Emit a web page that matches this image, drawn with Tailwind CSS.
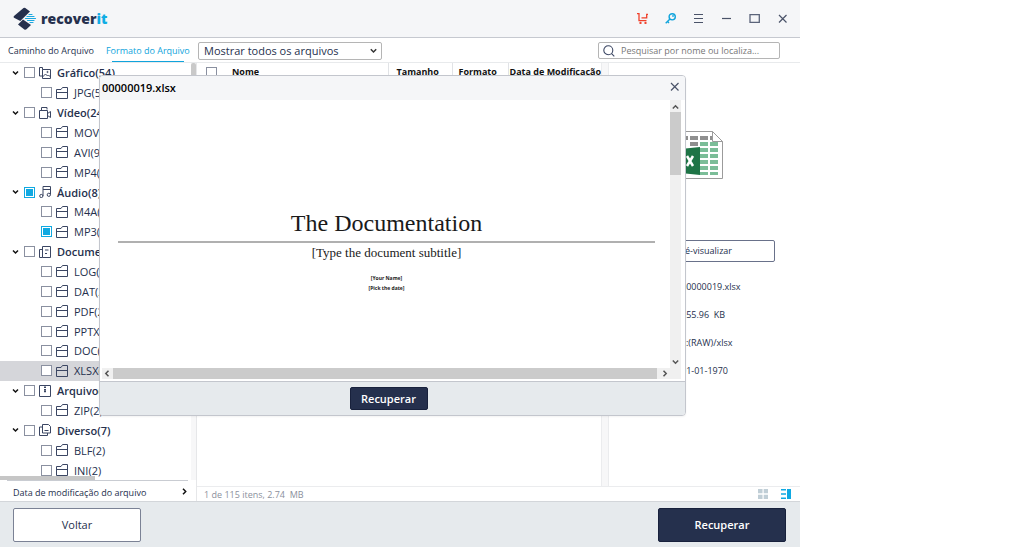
<!DOCTYPE html>
<html lang="pt-BR">
<head>
  <meta charset="UTF-8" />
  <title>Recoverit</title>
  <meta name="viewport" content="width=device-width, initial-scale=1" />
  <script src="https://cdn.jsdelivr.net/npm/@tailwindcss/browser@4"></script>
</head>
<body class="bg-white font-['Open_Sans','Noto_Sans',sans-serif] text-[#25304d]">
  <div class="relative flex flex-col h-screen w-full max-w-[800px] overflow-hidden">

    <!-- Title bar -->
    <header class="flex items-center justify-between h-[38px] shrink-0 pl-[13px] pr-3 bg-[#f5f6f8] border-b border-[#c6c9d0]">
      <div class="flex items-center gap-1">
        <svg class="w-6 h-6" viewBox="0 0 24 24">
          <path fill="#25304d" d="M12.300 1 L17 4.500 L7.300 14 L1 10.800 Q0 10 1 9 L10.500 1 Q11.400 .4 12.300 1 Z" />
          <path fill="#25304d" d="M10 12.500 L18 18 L13.500 22.300 Q12.500 23.100 11.300 22.400 L5 17.600 Z" />
          <path stroke="#1ba8e0" stroke-width="1.2" stroke-linecap="round" d="M16 7.500h3 M14 9.500h7 M12.500 11.500h10 M14.500 13.500h6.500 M17 15.500h3" />
        </svg>
        <h1 class="text-[14px] leading-5 font-extrabold">recover<span class="text-[#10ade4]">it</span></h1>
      </div>
      <div class="flex items-center gap-[17px]">
        <button aria-label="Comprar" class="w-[11px] h-4 flex items-center">
          <svg class="w-[11px] h-[11px]" viewBox="0 0 11 11" fill="none" stroke="#f0402a" stroke-width="1.3"><path d="M0 .7h2v7h7.500 M4.500 4.800h5.200v-3.500h1.300" /><circle cx="3.500" cy="10" r=".5" /><circle cx="8.500" cy="10" r=".5" /></svg>
        </button>
        <button aria-label="Registrar" class="w-[11px] h-4 flex items-center">
          <svg class="w-[11px] h-[11px]" viewBox="0 0 11 11" fill="none" stroke="#10a4dc" stroke-width="1.4"><circle cx="7.200" cy="3.800" r="3.100" /><path d="M5 6 L.7 10.300 M2.500 8.500l1.500 1.500" /><circle cx="8" cy="3" r=".3" /></svg>
        </button>
        <button aria-label="Menu" class="w-[11px] h-4 flex items-center">
          <svg class="w-[11px] h-[11px]" viewBox="0 0 11 11" stroke="#4a5369" stroke-width="1.2"><path d="M1 1.500h9 M1 5.500h9 M1 9.500h9" /></svg>
        </button>
        <button aria-label="Minimizar" class="w-[11px] h-4 flex items-center">
          <svg class="w-[11px] h-[11px]" viewBox="0 0 11 11" stroke="#4a5369" stroke-width="1.2"><path d="M1 5.500h9" /></svg>
        </button>
        <button aria-label="Maximizar" class="w-[11px] h-4 flex items-center">
          <svg class="w-[11px] h-[11px]" viewBox="0 0 11 11" fill="none" stroke="#5b647a" stroke-width="1.3"><path d="M1 1.600h9.300v7.800h-9.300z" /></svg>
        </button>
        <button aria-label="Fechar" class="w-[11px] h-4 flex items-center">
          <svg class="w-[11px] h-[11px]" viewBox="0 0 11 11" stroke="#4a5369" stroke-width="1.2"><path d="M2 2l7.500 7.500 M9.500 2l-7.500 7.500" /></svg>
        </button>
      </div>
    </header>

    <!-- Toolbar -->
    <div class="flex h-[25px] shrink-0 border-b border-[#e8eaec]">
      <nav class="flex w-[198px] shrink-0 pl-2 gap-3 text-[9px] leading-3 whitespace-nowrap">
        <a href="#" class="pt-[7px]">Caminho do Arquivo</a>
        <a href="#" class="pt-[7px] text-[#10a4dc] relative after:absolute after:left-[6px] after:right-[6px] after:bottom-0 after:h-px after:bg-[#10a4dc]">Formato do Arquivo</a>
      </nav>
      <div class="relative w-[184px] h-[18px] mt-1">
        <select aria-label="Filtro" class="block appearance-none w-full h-full pl-[5px] text-[11px] leading-4 bg-white border border-[#b5b5b5] rounded-xs">
          <option>Mostrar todos os arquivos</option>
        </select>
        <svg class="absolute right-[5px] top-[6px] w-[7px] h-[6px] pointer-events-none" viewBox="0 0 7 6" fill="none" stroke="#333" stroke-width="1.500"><path d="M.8 1.300l2.700 2.700 2.700-2.700" /></svg>
      </div>
      <label class="relative ml-auto mr-5 mt-1 w-[182px] h-[17px]">
        <svg class="absolute left-[5px] top-[3px] w-3 h-3" viewBox="0 0 12 12" fill="none" stroke="#3b4663" stroke-width="1.100"><circle cx="5.300" cy="5.300" r="4.500" /><path d="M8.600 8.600l2.700 2.700" /></svg>
        <input type="text" aria-label="Pesquisar" placeholder="Pesquisar por nome ou localiza..." class="block w-full h-full pl-[22px] text-[9px] border border-[#b5b5b5] rounded-xs placeholder:text-[#777]" />
      </label>
    </div>

    <div class="flex flex-1 min-h-0">
      <!-- File type tree -->
      <aside class="flex flex-col w-[197px] shrink-0 border-r border-[#e6e7e9]">
        <div class="relative flex-1 min-h-0 overflow-hidden">
          <ul id="tree" class="grid auto-rows-fr h-full text-[11px] leading-4"></ul>
          <div class="absolute right-0 inset-y-0 w-[5px] bg-[#f7f7f8]"><div class="h-[180px] bg-[#c9c9c9] rounded-xs"></div></div>
          <div class="absolute left-0 bottom-0 w-[95px] h-1 bg-[#c6c6c6]"></div>
        </div>
        <button class="flex items-center justify-between h-[21px] ml-[7px] mr-2 pl-[6px] pr-px border-t border-[#c9ccd2] text-[9px] leading-3">
          <span class="pt-1">Data de modificação do arquivo</span>
          <svg class="w-[5px] h-[7px]" viewBox="0 0 5 7" fill="none" stroke="#111" stroke-width="1.500"><path d="M1 .8l2.700 2.700-2.700 2.700" /></svg>
        </button>
      </aside>

      <div class="flex flex-col flex-1 min-w-0">
        <div class="flex flex-1 min-h-0">
          <div class="flex-1">
            <table class="w-full table-fixed text-[9px] leading-3 text-[#111]">
              <thead>
                <tr class="h-[18px] text-left">
                  <th class="w-[191px] pl-[9px] border-r border-[#e1e3e6]">
                    <div class="flex items-center gap-[15px]">
                      <input type="checkbox" aria-label="Selecionar tudo" class="appearance-none w-[11px] h-[11px] border border-[#8a90a0]" />
                      <span>Nome</span>
                    </div>
                  </th>
                  <th class="w-[64px] pl-2 border-r border-[#e1e3e6]">Tamanho</th>
                  <th class="w-[56px] pl-[6px] border-r border-[#e1e3e6]">Formato</th>
                  <th class="pl-px whitespace-nowrap">Data de Modificação</th>
                </tr>
              </thead>
            </table>
          </div>
          <div class="w-[8px] shrink-0 bg-[#f7f7f8] border-x border-[#ebecee]"></div>

          <!-- Details of the selected file -->
          <section class="w-[191px] shrink-0 flex flex-col items-center pt-[67px] text-[9px] leading-3">
            <svg class="w-[62px] h-[50px] mr-[26px]" viewBox="0 0 62 50">
              <path fill="#fff" stroke="#9b9b9b" d="M20.500 1.500h31l10 10v37h-41z" />
              <path fill="#8f8f8f" d="M29 6h8v4h-8z M39 6h8v4h-8z M49 6h3v4h-3z M29 12h8v4h-8z M20 6h7v4h-7z" />
              <g fill="#7bbd98">
                <path d="M39 12h8v4h-8z M49 12h8v4h-8z M39 18h8v4h-8z M49 18h8v4h-8z M39 24h8v4h-8z M49 24h8v4h-8z M39 30h8v4h-8z M49 30h8v4h-8z M39 36h8v4h-8z M49 36h8v4h-8z M39 42h8v3h-8z M49 42h8v3h-8z" />
              </g>
              <path fill="#1e7446" d="M10 20l29-3v28l-29-3z" />
              <path stroke="#fff" stroke-width="2.500" d="M26 26l6 10 M32 26l-6 10" />
              <path fill="#fff" stroke="#9b9b9b" d="M51.500 1.500v10h10z" />
            </svg>
            <button class="w-[142px] h-[22px] mt-[60px] mr-px border border-[#69718a] rounded-xs">Pré-visualizar</button>
            <dl class="grid grid-cols-[58px_1fr] gap-y-4 w-full pl-[14px] mt-[19px] whitespace-pre">
              <dt>Nome</dt><dd>00000019.xlsx</dd>
              <dt>Tamanho</dt><dd>555.96  KB</dd>
              <dt>Caminho</dt><dd>E:(RAW)/xlsx</dd>
              <dt>Data</dt><dd>01-01-1970</dd>
            </dl>
          </section>
        </div>
        <div class="flex items-center h-[15px] shrink-0 pl-[7px] pr-[9px] border-t border-[#ebecee] text-[9px] leading-3 text-[#8b909c]">
          <span class="pt-px whitespace-pre">1 de 115 itens, 2.74  MB</span>
          <button aria-label="Grade" class="ml-auto"><svg class="w-[10px] h-[10px]" viewBox="0 0 10 10" fill="#c0ced6"><path d="M0 0h4.500v4.300h-4.500z M5.700 0h4.300v4.300h-4.300z M0 5.700h4.500v4.300h-4.500z M5.700 5.700h4.300v4.300h-4.300z" /></svg></button>
          <button aria-label="Lista" class="ml-[13px]"><svg class="w-[10px] h-[10px]" viewBox="0 0 10 10" fill="#10a9e2"><path d="M0 0h5v1.500h-5z M0 4.300h5v1.500h-5z M0 8.500h5v1.500h-5z M6 0h4v10h-4z" /></svg></button>
        </div>
      </div>
    </div>

    <!-- Bottom bar -->
    <footer class="flex items-center justify-between h-[46px] shrink-0 pl-[13px] pr-[14px] bg-[#e6eaed] border-t border-[#d3d6da] text-[11px] leading-4">
      <button class="w-32 h-[34px] bg-white border border-[#7b8295] rounded-xs">Voltar</button>
      <button class="w-32 h-[34px] bg-[#25304d] text-white font-semibold border border-[#18213c] rounded-xs">Recuperar</button>
    </footer>

    <!-- Preview dialog -->
    <div role="dialog" aria-label="00000019.xlsx" class="absolute left-[99px] right-[114px] top-[75px] bottom-[131px] flex flex-col bg-white border border-[#c3c6cd] rounded-sm shadow-xs overflow-hidden">
      <div class="flex items-center justify-between h-6 shrink-0 pl-[2px] pr-[5px] bg-[#f5f6f8]">
        <h2 class="text-[11px] leading-4 font-semibold text-black">00000019.xlsx</h2>
        <button aria-label="Fechar prévia" class="mb-1"><svg class="w-[11px] h-[11px]" viewBox="0 0 11 11" stroke="#4a5369" stroke-width="1.200"><path d="M2 2l7.500 7.500 M9.500 2l-7.500 7.500" /></svg></button>
      </div>
      <div class="flex flex-1 min-h-0 pr-1">
        <article class="flex-1 pl-[18px] pr-[15px] pt-[107px] text-center text-[#1a1a1a] font-['Liberation_Serif',serif]">
          <h3 class="text-[24px] leading-8 border-b-2 border-[#b0b0b0] pb-[2px]">The Documentation</h3>
          <p class="text-[13px] leading-5">[Type the document subtitle]</p>
          <div class="mt-[10px] text-[5px] leading-[10px] font-bold font-['Open_Sans',sans-serif]">
            <p>[Your Name]</p>
            <p>[Pick the date]</p>
          </div>
        </article>
        <div class="flex flex-col items-center justify-between w-[11px] bg-[#f0f0f0]">
          <svg class="w-[7px] h-3 shrink-0" viewBox="0 0 7 12" fill="none" stroke="#555" stroke-width="1.500"><path d="M.8 8.500l2.700-2.700 2.700 2.700" /></svg>
          <div class="w-[11px] h-[63px] mb-auto bg-[#cbcbcb]"></div>
          <svg class="w-[7px] h-3 shrink-0" viewBox="0 0 7 12" fill="none" stroke="#555" stroke-width="1.500"><path d="M.8 4.500l2.700 2.700 2.700-2.700" /></svg>
        </div>
      </div>
      <div class="flex items-center h-[11px] shrink-0 ml-[2px] mr-1 mb-[2px] pr-[10px] bg-[#f0f0f0]">
        <svg class="w-[11px] h-[7px]" viewBox="0 0 11 7" fill="none" stroke="#555" stroke-width="1.500"><path d="M6.500 .8l-2.700 2.700 2.700 2.700" /></svg>
        <div class="flex-1 h-full bg-[#cbcbcb]"></div>
        <svg class="w-[14px] h-[7px]" viewBox="0 0 14 7" fill="none" stroke="#555" stroke-width="1.500"><path d="M6.500 .8l2.700 2.700-2.700 2.700" /></svg>
      </div>
      <div class="flex items-center justify-center h-[34px] shrink-0 pr-2 bg-[#e6eaed] border-t border-[#c3c6cd]">
        <button class="w-[78px] h-[23px] bg-[#25304d] text-white text-[11px] leading-4 font-semibold border border-[#18213c] rounded-xs">Recuperar</button>
      </div>
    </div>
  </div>

  <script>
    const icons = {
      image: '<path d="M3.500 2.500v-2h-3v8.500h2.500 M3.500 2.500h8v9h-8z M3.500 10l3-3 2 2 1-1 2 2"/><circle cx="8.500" cy="5" r=".6"/>',
      video: '<path d="M2.500 3v-2.500h5.500v2 M.5 3.500h8v8h-8z M8.500 6.500l3-2v6l-3-2"/>',
      audio: '<path d="M4 10v-9.500h7.500v8 M4 3.500h7.500"/><circle cx="2.300" cy="10" r="1.600"/><circle cx="9.800" cy="8.800" r="1.600"/>',
      doc: '<path d="M3.500 .5h8v11h-8z M3.500 3.500h-3v8h3 M6 4h3.500 M6 7.500h2"/>',
      archive: '<path d="M.5 .5h11v11h-11z M6 1v1 M5 2.500h2 M5 4.500h2 M5.500 5.500h1v1.500h-1z"/>',
      misc: '<path d="M3.500 .5h6l2 2v6.500h-8z M3.500 3h-3v8.500h8v-2.500 M5.500 6.500h4"/>',
      folder: '<path d="M.5 11.500v-9h4.500l1.500-2h5v11z M.5 5.500h11"/>'
    };

    const groups = [
      { name: "Gráfico(54)", icon: "image", items: ["JPG(54)"] },
      { name: "Vídeo(24)", icon: "video", items: ["MOV(7)", "AVI(9)", "MP4(8)"] },
      { name: "Áudio(8)", icon: "audio", partial: true, items: ["M4A(4)", "MP3(4)"] },
      { name: "Documento(20)", icon: "doc", items: ["LOG(2)", "DAT(2)", "PDF(2)", "PPTX(4)", "DOC(4)", "XLSX(6)"] },
      { name: "Arquivo(2)", icon: "archive", items: ["ZIP(2)"] },
      { name: "Diverso(7)", icon: "misc", items: ["BLF(2)", "INI(2)"] }
    ];

    const box = "appearance-none w-[11px] h-[11px] border border-[#8a90a0] bg-white";
    const boxPartial = "appearance-none w-[11px] h-[11px] p-px border border-[#10a9e2] bg-[#10a9e2] bg-clip-content";
    const chevron = '<svg class="w-[7px] h-[6px] mr-[5px]" viewBox="0 0 7 6" fill="none" stroke="#111" stroke-width="1.500"><path d="M1 1.500l2.500 2.500 2.500-2.500"/></svg>';

    function row(name, icon, rowClass, partial, before) {
      return `<li class="${rowClass}"><label class="flex items-center">${before}
        <input type="checkbox" class="${partial ? boxPartial : box}" />
        <svg class="w-3 h-3 ml-1 mr-[6px]" viewBox="0 0 12 12" fill="none" stroke="#3b4663">${icons[icon]}</svg>
        <span class="pt-px">${name}</span></label></li>`;
    }

    document.getElementById("tree").innerHTML = groups.map(g =>
      row(g.name, g.icon, "flex items-center pl-3 min-h-0 font-semibold", g.partial, chevron) +
      g.items.map(i => {
        const selected = i.startsWith("XLSX");
        return row(i, "folder", selected ? "flex items-center pl-[41px] min-h-0 bg-[#d5d6da]" : "flex items-center pl-[41px] min-h-0", i.startsWith("MP3"), "");
      }).join("")
    ).join("");
  </script>
</body>
</html>
